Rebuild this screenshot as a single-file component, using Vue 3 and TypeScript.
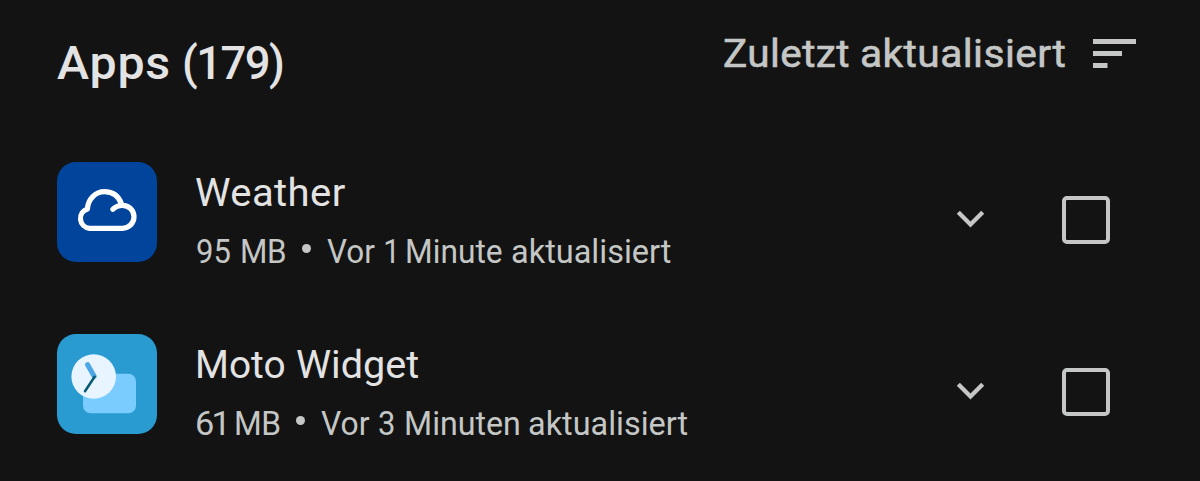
<script setup lang="ts">
/** A word set to an exact ink width, with the gap to the ink before it. */
interface Word {
  text: string
  gap: number
  width: number
  tracking?: number
}

interface AppEntry {
  id: string
  name: Word[]
  size: Word[]
  updated: Word[]
}

const heading: Word[] = [
  { text: 'Apps', gap: 0.2, width: 112, tracking: 0.8 },
  { text: '(179)', gap: 14.8, width: 98.5, tracking: -1.6 },
]

const sortLabel: Word[] = [
  { text: 'Zuletzt', gap: 0, width: 124.8, tracking: 0.4 },
  { text: 'aktualisiert', gap: 13.2, width: 203, tracking: 0.4 },
]

const apps: AppEntry[] = [
  {
    id: 'weather',
    name: [{ text: 'Weather', gap: 0, width: 149, tracking: 0.4 }],
    size: [
      { text: '95', gap: 0.8, width: 33.4 },
      { text: 'MB', gap: 12, width: 43.1, tracking: -0.5 },
    ],
    updated: [
      { text: 'Vor', gap: 16.5, width: 47.7 },
      { text: '1', gap: 10.1, width: 9 },
      { text: 'Minute', gap: 12.9, width: 95.1 },
      { text: 'aktualisiert', gap: 10.3, width: 158.7 },
    ],
  },
  {
    id: 'moto',
    name: [
      { text: 'Moto', gap: 2, width: 86.3 },
      { text: 'Widget', gap: 12.7, width: 121.4 },
    ],
    size: [
      { text: '61', gap: 1.2, width: 27, tracking: -2.6 },
      { text: 'MB', gap: 12, width: 43.6, tracking: -0.5 },
    ],
    updated: [
      { text: 'Vor', gap: 16.2, width: 48.3 },
      { text: '3', gap: 9.3, width: 15 },
      { text: 'Minuten', gap: 11.5, width: 112.7 },
      { text: 'aktualisiert', gap: 10.3, width: 158.4 },
    ],
  },
]

const ctx = document.createElement('canvas').getContext('2d')!

function boxStyle(word: Word) {
  return { width: `${word.width}px`, marginLeft: `${word.gap}px` }
}

function inkStyle(word: Word, font: string) {
  const tracking = word.tracking ?? 0
  ctx.font = `${font} Roboto, "Liberation Sans", sans-serif`
  const m = ctx.measureText(word.text)
  const ink = m.actualBoundingBoxLeft + m.actualBoundingBoxRight + tracking * (word.text.length - 1)
  const scale = word.width / ink
  return {
    letterSpacing: `${tracking}px`,
    transform: `translateX(${m.actualBoundingBoxLeft * scale}px) scaleX(${scale})`,
  }
}
</script>

<template>
  <main class="screen">
    <header class="head">
      <h1 class="title">
        <span v-for="w in heading" :key="w.text" class="word" :style="boxStyle(w)"><span class="ink" :style="inkStyle(w, '500 47px')">{{ w.text }}</span></span>
      </h1>
      <div class="sort">
        <span class="sort-label">
          <span v-for="w in sortLabel" :key="w.text" class="word" :style="boxStyle(w)"><span class="ink" :style="inkStyle(w, '400 39px')">{{ w.text }}</span></span>
        </span>
        <svg class="sort-icon" width="43" height="30" viewBox="0 0 43 30">
          <path d="M0 0h43v5H0zM0 12h29v5H0zM0 24h14.500v5H0z" fill="#c4c7c5" />
        </svg>
      </div>
    </header>
    <ul class="list">
      <li v-for="app in apps" :key="app.id" class="row">
        <svg v-if="app.id === 'weather'" class="icon" viewBox="0 0 100 100">
          <rect width="100" height="100" rx="19" fill="#00459b" />
          <path
            d="M55.900 47.300C58.400 44.600 61.800 43.300 65.500 43.300a11.500 11.500 0 0 1 0 23H32.500a9.900 9.900 0 0 1-2.100-19.300C31 37 38.500 29.700 47.500 29.700c8.300 0 14.300 4.800 17.200 12.600"
            fill="none" stroke="#fff" stroke-width="5.200" stroke-linecap="round" stroke-linejoin="round"
          />
        </svg>
        <svg v-else class="icon" viewBox="0 0 100 100">
          <rect width="100" height="100" rx="19" fill="#299bd1" />
          <rect x="26" y="39.700" width="53" height="39.600" rx="7.500" fill="#7accff" />
          <circle cx="36.700" cy="42.500" r="22.300" fill="#e8f4ff" />
          <path d="M30.600 30.700L37.200 42.300" stroke="#4ba6e5" stroke-width="5" stroke-linecap="round" />
          <path d="M37.600 42.800L28 57.300" stroke="#075a70" stroke-width="2.500" stroke-linecap="round" />
        </svg>
        <div class="info">
          <div class="name">
            <span v-for="w in app.name" :key="w.text" class="word" :style="boxStyle(w)"><span class="ink" :style="inkStyle(w, '400 39px')">{{ w.text }}</span></span>
          </div>
          <div class="meta">
            <span v-for="w in app.size" :key="w.text" class="word" :style="boxStyle(w)"><span class="ink" :style="inkStyle(w, '400 33px')">{{ w.text }}</span></span>
            <i class="dot"></i>
            <span v-for="w in app.updated" :key="w.text" class="word" :style="boxStyle(w)"><span class="ink" :style="inkStyle(w, '400 33px')">{{ w.text }}</span></span>
          </div>
        </div>
        <svg class="chevron" width="29" height="20" viewBox="0 0 29 20">
          <path d="M2.300 3.200L14.500 15.400L26.700 3.200" fill="none" stroke="#c4c7c5" stroke-width="4.300" />
        </svg>
        <span class="box" role="checkbox" aria-checked="false"></span>
      </li>
    </ul>
  </main>
</template>

<style>
body {
  margin: 0;
  background: #131313;
}
</style>

<style scoped>
.screen {
  box-sizing: border-box;
  width: 1200px;
  height: 481px;
  overflow: hidden;
  padding: 32px 64px 0 57px;
  background: #131313;
  color: #e3e3e3;
  font-family: Roboto, "Liberation Sans", sans-serif;
}
.head {
  display: flex;
  justify-content: space-between;
  align-items: flex-start;
  height: 130px;
}
.title {
  display: flex;
  margin: 0;
  padding-top: 3px;
  font-size: 47px;
  font-weight: 500;
  line-height: 56px;
}
.word {
  flex: none;
  white-space: nowrap;
}
.ink {
  display: inline-block;
  transform-origin: 0 50%;
}
.sort {
  display: flex;
  align-items: flex-start;
  gap: 28px;
  color: #c4c7c5;
}
.sort-label {
  display: flex;
  margin-top: 1px;
  font-size: 39px;
  font-weight: 400;
  line-height: 42px;
  -webkit-text-stroke: 0.6px #c4c7c5;
}
.sort-icon {
  margin-top: 7px;
}
.list {
  margin: 0;
  padding: 0;
  list-style: none;
  display: grid;
  gap: 72px;
}
.row {
  display: flex;
  height: 100px;
}
.icon {
  width: 100px;
  height: 100px;
}
.info {
  flex: 1;
  padding-left: 39px;
}
.name {
  display: flex;
  margin-top: 7px;
  font-size: 39px;
  line-height: 48px;
}
.meta {
  display: flex;
  margin-top: 14px;
  color: #c4c7c5;
  font-size: 33px;
  line-height: 42px;
}
.dot {
  width: 9px;
  height: 9px;
  margin: 13px 0 0 16.500px;
  border-radius: 50%;
  background: #c4c7c5;
}
.chevron {
  margin: 47px 77px 0 0;
}
.box {
  box-sizing: border-box;
  width: 48px;
  height: 48px;
  margin: 34px 26px 0 0;
  border: 4px solid #c4c7c5;
  border-radius: 5px;
}
</style>
